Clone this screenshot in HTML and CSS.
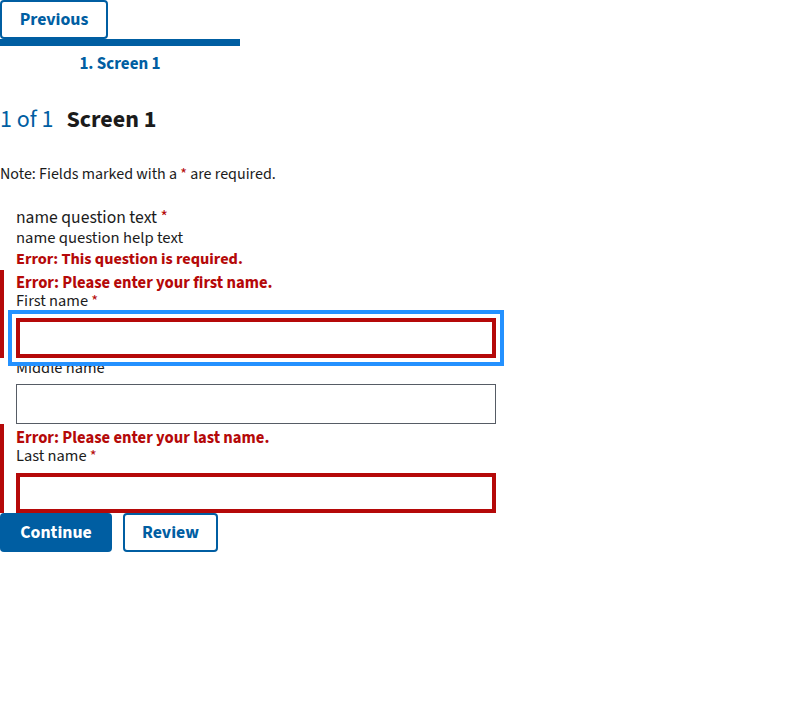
FILE: index.html
```html
<!DOCTYPE html>
<html lang="en">
<head>
<meta charset="utf-8">
<title>Screen 1</title>
<link rel="stylesheet" href="styles.css">
</head>
<body>
<div class="top">
  <button class="btn btn-outline btn-prev" type="button">Previous</button>
</div>
<nav class="progress">
  <div class="progress-bar"></div>
  <div class="progress-step">1. Screen 1</div>
</nav>
<h2 class="heading"><span class="count">1 of 1</span><span class="title">Screen 1</span></h2>
<p class="note">Note: Fields marked with a <span class="req">*</span> are required.</p>
<div class="question" role="group" aria-labelledby="qtext">
  <div class="q-text" id="qtext">name question text <span class="req">*</span></div>
  <div class="q-help">name question help text</div>
  <div class="error-msg q-error">Error: This question is required.</div>
  <div class="group group-error group-first">
    <div class="error-msg">Error: Please enter your first name.</div>
    <label class="label" for="first">First name <span class="req">*</span></label>
    <input class="input input-error input-focus" id="first" type="text">
  </div>
  <div class="group group-plain">
    <label class="label label-middle" for="middle">Middle name</label>
    <input class="input input-middle" id="middle" type="text">
  </div>
  <div class="group group-error group-last">
    <div class="error-msg">Error: Please enter your last name.</div>
    <label class="label" for="last">Last name <span class="req">*</span></label>
    <input class="input input-error input-last" id="last" type="text">
  </div>
</div>
<div class="actions">
  <button class="btn btn-solid btn-continue" type="button">Continue</button>
  <button class="btn btn-outline btn-review" type="button">Review</button>
</div>
</body>
</html>
```
FILE: styles.css
```css
* { box-sizing: border-box; }
body {
  margin: 0;
  font-family: "Source Sans Pro", "Source Sans 3", Lato, sans-serif;
  color: #1b1b1b;
  background: #fff;
  font-size: 16px;
}
.btn {
  font-family: inherit;
  font-weight: 700;
  font-size: 17.8px;
  height: 39px;
  border-radius: 4px;
  display: flex;
  align-items: center;
  justify-content: center;
  padding: 0;
  margin: 0;
  cursor: pointer;
}
.btn-outline {
  background: #fff;
  color: #005ea2;
  border: 2px solid #005ea2;
}
.btn-solid {
  background: #005ea2;
  color: #fff;
  border: 0;
}
.btn-prev { width: 108px; height: 39px; }
.btn-continue { width: 112px; }
.btn-review { width: 95px; }

.progress { width: 240px; }
.progress-bar { height: 7px; background: #005ea2; }
.progress-step {
  text-align: center;
  color: #005ea2;
  font-weight: 700;
  font-size: 17px;
  line-height: 24px;
  padding-top: 6px;
}
.heading {
  margin: 28px 0 0;
  display: flex;
  align-items: baseline;
  gap: 13px;
  line-height: 32px;
  font-weight: 400;
}
.count { color: #005ea2; font-size: 24px; font-weight: 400; }
.title { font-size: 24px; font-weight: 700; }
.note {
  margin: 26px 0 0;
  font-size: 16px;
  line-height: 24px;
}
.req { color: #b50909; }
.question { margin-top: 22px; }
.q-text {
  padding-left: 16px;
  font-size: 17.6px;
  line-height: 20px;
}
.q-help, .q-error { padding-left: 16px; }
.q-help { font-size: 16.6px; line-height: 20px; }
.error-msg {
  color: #b50909;
  font-weight: 700;
  font-size: 16.6px;
  line-height: 18px;
}
.q-error { line-height: 22px; font-size: 16.3px; }
.group {
  padding-left: 16px;
  display: flex;
  flex-direction: column;
  align-items: flex-start;
}
.group-error {
  border-left: 4px solid #b50909;
  padding-left: 12px;
  padding-top: 3px;
}
.group-first { padding-top: 4px; }
.group-last { padding-top: 5px; }
.label { font-size: 16.4px; line-height: 18px; display: block; }
.label-middle { line-height: 20px; }
.input {
  width: 480px;
  height: 40px;
  margin: 9px 0 0;
  border: 1px solid #565c65;
  border-radius: 0;
  background: #fff;
  font: inherit;
  padding: 0 8px;
}
.group-first .input { margin-top: 8px; }
.input-middle { margin-top: 6px; }
.input-last { margin-top: 8px; }
.input-error { border: 4px solid #b50909; }
.input-focus {
  outline: 4px solid #2491ff;
  outline-offset: 4px;
  position: relative;
  z-index: 1;
}
.actions {
  display: flex;
  gap: 11px;
}
```
